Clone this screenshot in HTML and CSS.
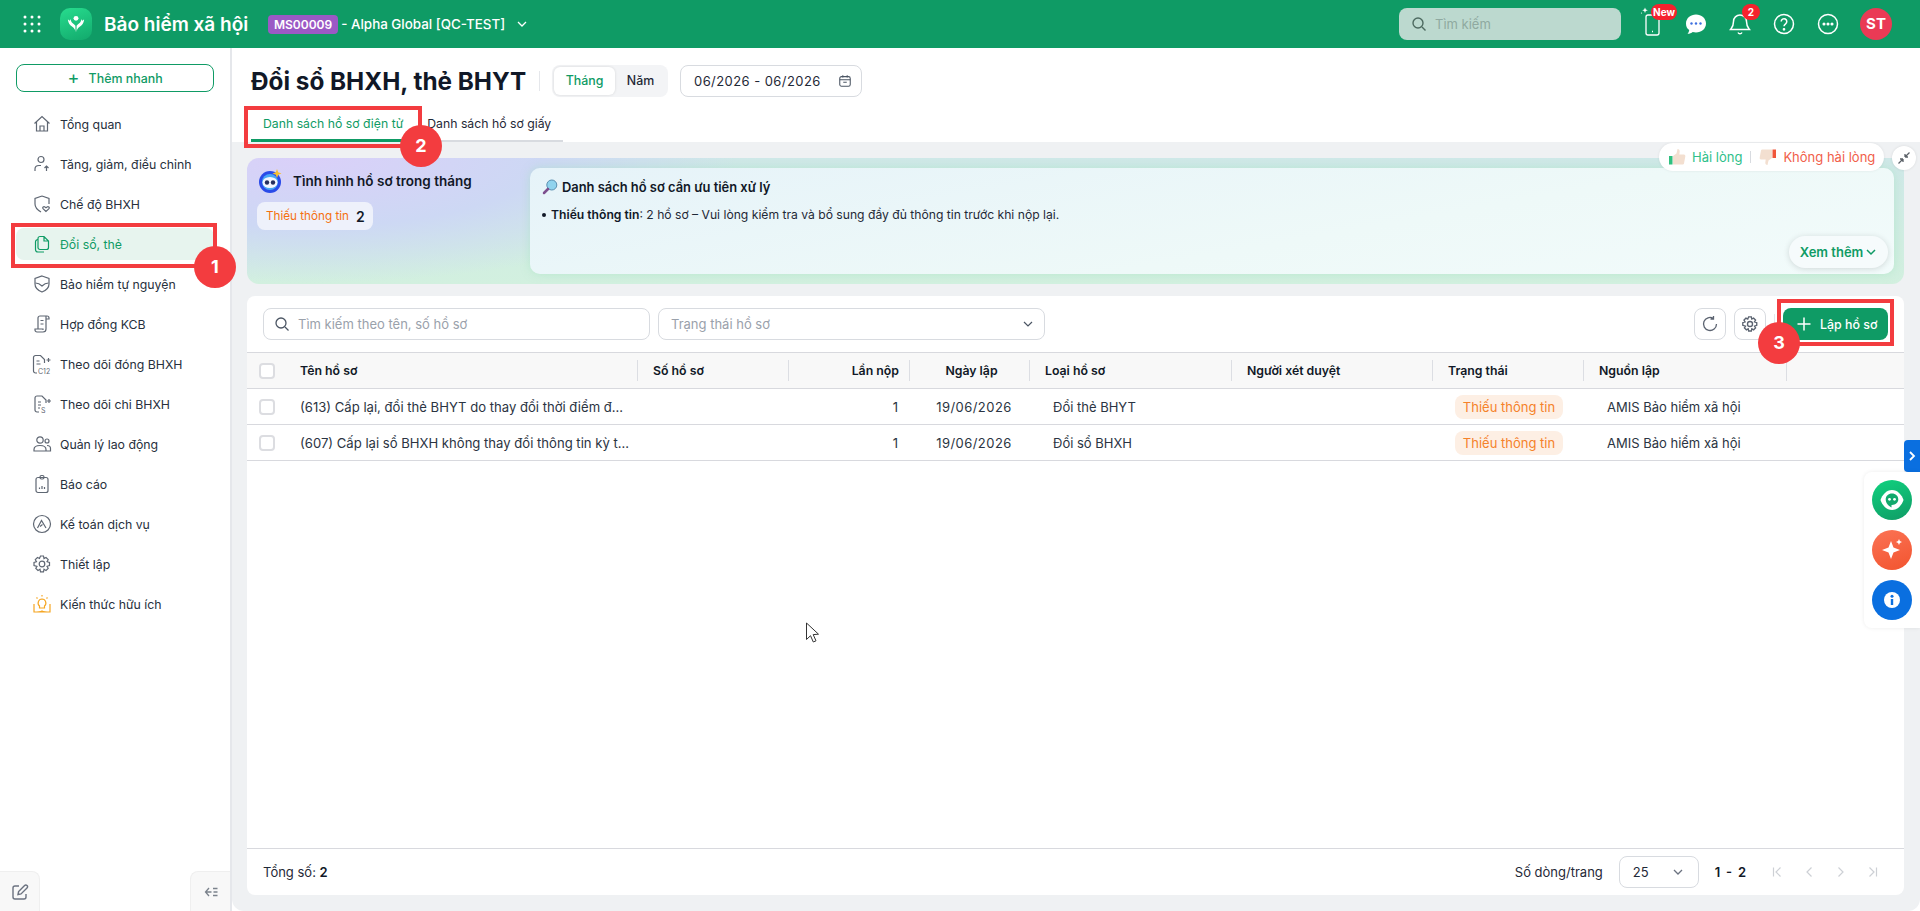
FILE: index.html
```html
<!DOCTYPE html>
<html lang="vi">
<head>
    <meta charset="UTF-8">
    <meta name="viewport" content="width=device-width, initial-scale=1.0">
    <title>Đổi sổ BHXH, thẻ BHYT</title>
    <link rel="stylesheet" href="styles.css">
</head>
<body>
    <!-- Thanh trên cùng -->
    <header class="topbar">
        <div class="topbar-left">
            <svg class="apps-icon" viewBox="0 0 18 18" fill="#fff"><circle cx="2" cy="2" r="1.5"/><circle cx="9" cy="2" r="1.5"/><circle cx="16" cy="2" r="1.5"/><circle cx="2" cy="9" r="1.5"/><circle cx="9" cy="9" r="1.5"/><circle cx="16" cy="9" r="1.5"/><circle cx="2" cy="16" r="1.5"/><circle cx="9" cy="16" r="1.5"/><circle cx="16" cy="16" r="1.5"/></svg>
            <div class="app-logo">
                <svg viewBox="0 0 32 32" width="26" height="26" fill="#fff"><circle cx="16" cy="9" r="3"/><path d="M15.300 26c-.2-3-1.500-5-3.800-6.500C8.500 17.500 6.500 15 6 10.500c1 .2 1.700.8 2.200 1.700.2-.8.5-1.400 1.100-1.900.3 1.800 1 3.400 2.300 4.600 1.300 1.100 2.600 2 3.700 3.300z"/><path d="M16.700 26c.2-3 1.500-5 3.800-6.500 3-2 5-4.500 5.500-9-1 .2-1.700.8-2.200 1.700-.2-.8-.5-1.400-1.100-1.900-.3 1.800-1 3.400-2.300 4.600-1.300 1.100-2.600 2-3.700 3.300z"/></svg>
            </div>
            <span class="app-name">Bảo hiểm xã hội</span>
            <span class="org-code">MS00009</span>
            <span class="org-name">- Alpha Global [QC-TEST]</span>
            <svg class="org-caret" viewBox="0 0 12 12" fill="none" stroke="#fff" stroke-width="1.3"><path d="M2 4l4 4 4-4"/></svg>
        </div>
        <div class="topbar-right">
            <div class="top-search">
                <svg viewBox="0 0 16 16" width="16" height="16" fill="none" stroke="#4d6a60" stroke-width="1.4"><circle cx="7" cy="7" r="5"/><path d="M11 11l3.500 3.500"/></svg>
                <span>Tìm kiếm</span>
            </div>
            <div class="top-icons">
                <div class="top-icon">
                    <svg viewBox="0 0 24 24" width="24" height="24" fill="none" stroke="#fff" stroke-width="1.3"><rect x="6" y="3" width="13" height="20" rx="2"/><path d="M12 19.500h1"/><path d="M5 -4.500l.8 2 2 .8-2 .8-.8 2-.8-2-2-.8 2-.8z" fill="#fff" stroke="none"/><circle cx="1.500" cy="1" r=".6" fill="#fff" stroke="none"/></svg>
                    <span class="top-badge badge-new">New</span>
                </div>
                <div class="top-icon">
                    <svg viewBox="0 0 24 24" width="24" height="24"><path d="M12 2.500c5.500 0 10 3.800 10 9s-4.500 9-10 9c-1.200 0-2.300-.2-3.300-.5-1.200 1-3 1.800-5.200 1.800 1-1 1.600-2.300 1.700-3.700C2.900 16.400 2 14.100 2 11.500c0-5.200 4.500-9 10-9z" fill="#fff"/><circle cx="7.500" cy="11.500" r="1.200" fill="#3d6fe0"/><circle cx="12" cy="11.500" r="1.200" fill="#3d6fe0"/><circle cx="16.500" cy="11.500" r="1.200" fill="#3d6fe0"/></svg>
                </div>
                <div class="top-icon">
                    <svg viewBox="0 0 24 24" width="24" height="24" fill="none" stroke="#fff" stroke-width="1.500"><path d="M12 3a6.500 6.500 0 0 0-6.500 6.500c0 5-2 6.500-3 8h19c-1-1.500-3-3-3-8A6.500 6.500 0 0 0 12 3z"/><path d="M10 20.500a2.200 2.200 0 0 0 4 0"/></svg>
                    <span class="top-badge badge-count">2</span>
                </div>
                <div class="top-icon">
                    <svg viewBox="0 0 24 24" width="24" height="24" fill="none" stroke="#fff" stroke-width="1.500"><circle cx="12" cy="12" r="9.500"/><path d="M9.200 9.500a2.800 2.800 0 1 1 4.400 2.300c-1 .7-1.600 1.300-1.600 2.500"/><circle cx="12" cy="17.300" r=".6" fill="#fff"/></svg>
                </div>
                <div class="top-icon">
                    <svg viewBox="0 0 24 24" width="24" height="24" fill="none" stroke="#fff" stroke-width="1.500"><circle cx="12" cy="12" r="9.500"/><circle cx="8" cy="12" r=".8" fill="#fff"/><circle cx="12" cy="12" r=".8" fill="#fff"/><circle cx="16" cy="12" r=".8" fill="#fff"/></svg>
                </div>
            </div>
            <div class="avatar">ST</div>
        </div>
    </header>

    <div class="app-body">
        <!-- Menu trái -->
        <aside class="sidebar">
            <button class="quick-add"><span class="quick-plus">+</span> Thêm nhanh</button>
            <nav class="nav-list">
                <a class="nav-item">
                    <svg class="nav-icon" viewBox="0 0 20 20"><path d="M2.500 9.500L10 2.500l7.500 7M4.500 8v9h11V8M8 17v-5h4v5"/></svg>
                    Tổng quan
                </a>
                <a class="nav-item">
                    <svg class="nav-icon" viewBox="0 0 20 20"><circle cx="9" cy="5.500" r="3"/><path d="M3 17v-2c0-2 1.500-3.500 4-3.500h2M14.500 17v-5M12.500 14l2-2 2 2"/></svg>
                    Tăng, giảm, điều chỉnh
                </a>
                <a class="nav-item">
                    <svg class="nav-icon" viewBox="0 0 20 20"><path d="M10 2l7 2.500V10M10 2L3 4.500V10c0 3.500 2.500 6 6 8"/><path d="M14 17.500l-3-2.800c-1-1.200.7-2.700 2-1.700l1 .7 1-.7c1.300-1 3 .5 2 1.700z"/></svg>
                    Chế độ BHXH
                </a>
                <a class="nav-item active">
                    <svg class="nav-icon" viewBox="0 0 20 20"><path d="M8 2.500h4l4.500 4.500v6.500a2 2 0 0 1-2 2H8a2 2 0 0 1-2-2v-9a2 2 0 0 1 2-2zM12 2.500V7h4.500"/><path d="M6 5.500a2.500 2.500 0 0 0-2.500 2.500v7.500a2.500 2.500 0 0 0 2.500 2.500h6"/></svg>
                    Đổi sổ, thẻ
                </a>
                <a class="nav-item">
                    <svg class="nav-icon" viewBox="0 0 20 20"><path d="M10 2l7 2.500V10c0 4-3 6.500-7 8-4-1.500-7-4-7-8V4.500z"/><path d="M3.500 9c2.500 0 4.500 1 6.500 3 2-2 4-3 6.500-3"/></svg>
                    Bảo hiểm tự nguyện
                </a>
                <a class="nav-item">
                    <svg class="nav-icon" viewBox="0 0 20 20"><path d="M6 15V4a2 2 0 0 1 2-2h7a2 2 0 0 1 2 2v1h-3M14 2v13a3 3 0 0 1-3 3H5a2 2 0 0 1-2-2v-1h8v1M8.500 6.500h3M8.500 10h3"/></svg>
                    Hợp đồng KCB
                </a>
                <a class="nav-item">
                    <svg class="nav-icon" viewBox="0 0 20 20"><path d="M5 19H3.500a2 2 0 0 1-2-2V3.500a2 2 0 0 1 2-2h5l4 4V9M4.500 7h3M4.500 10h4M16.500 4v4M14.500 6h4"/><text x="6" y="19.500" class="nav-icon-text">C12</text></svg>
                    Theo dõi đóng BHXH
                </a>
                <a class="nav-item">
                    <svg class="nav-icon" viewBox="0 0 20 20"><path d="M7 18H5a2 2 0 0 1-2-2V4a2 2 0 0 1 2-2h5l4 4v3M6 8h3M6 11h3M6 14h2M17 5v4M15 7h4"/><text x="9" y="18.500" class="nav-icon-text">S</text></svg>
                    Theo dõi chi BHXH
                </a>
                <a class="nav-item">
                    <svg class="nav-icon" viewBox="0 0 20 20"><circle cx="8" cy="6" r="3.200"/><circle cx="15" cy="7" r="2"/><path d="M2 17v-1.500c0-2.500 2-4 6-4s6 1.500 6 4V17zM15 11.500c2 0 3.500 1 3.500 3V17H14"/></svg>
                    Quản lý lao động
                </a>
                <a class="nav-item">
                    <svg class="nav-icon" viewBox="0 0 20 20"><rect x="4" y="3.500" width="12" height="15" rx="2"/><rect x="8" y="1.500" width="4" height="3.500" rx="1.500"/><path d="M7.500 15v-1.500M10 15v-3M12.500 15v-2"/></svg>
                    Báo cáo
                </a>
                <a class="nav-item">
                    <svg class="nav-icon" viewBox="0 0 20 20"><circle cx="10" cy="10" r="8.500"/><path d="M5.500 14l4-7.500 4.500 7.500M8 12.500l2.500-2"/></svg>
                    Kế toán dịch vụ
                </a>
                <a class="nav-item">
                    <svg class="nav-icon" viewBox="0 0 20 20"><path d="M8.500 2h3l.5 2.500 2-1 2.200 2.200-1.200 2 2.500.8v3l-2.500.8 1.200 2-2.200 2.200-2-1.200-.5 2.500h-3l-.5-2.500-2 1.200-2.200-2.200 1.200-2L2 11.500v-3l2.500-.8-1.200-2L5.500 3.500l2 1z"/><circle cx="10" cy="10" r="2.800"/></svg>
                    Thiết lập
                </a>
                <a class="nav-item">
                    <svg class="nav-icon nav-icon-orange" viewBox="0 0 20 20"><path d="M2 10v8h16v-8M2 18c3 0 6 0 8-1 2 1 5 1 8 1"/><path d="M10 5a4 4 0 0 0-2.500 7v2h5v-2A4 4 0 0 0 10 5zM10 1v1.500M4.500 3.500l1 1M15.500 3.500l-1 1"/></svg>
                    Kiến thức hữu ích
                </a>
            </nav>
            <div class="sidebar-foot">
                <div class="foot-btn">
                    <svg viewBox="0 0 18 18" width="18" height="18" fill="none" stroke="#6b7280" stroke-width="1.400"><path d="M8 3H4a2 2 0 0 0-2 2v9a2 2 0 0 0 2 2h9a2 2 0 0 0 2-2v-3"/><path d="M7 11.500l.6-3 6-6a1.400 1.400 0 0 1 2.400 2.400l-6 6z"/></svg>
                </div>
                <div class="foot-btn">
                    <svg viewBox="0 0 16 16" width="16" height="16" fill="none" stroke="#7b828c" stroke-width="1.300"><path d="M6 4L2.500 8 6 12M2.500 8h6M10 4.500h4.500M10.500 8h4M10 11.500h4.500"/></svg>
                </div>
            </div>
        </aside>

        <main class="main">
            <div class="page-head">
                <div class="title-row">
                    <h1 class="page-title">Đổi sổ BHXH, thẻ BHYT</h1>
                    <div class="period-toggle">
                        <span class="period-opt on">Tháng</span>
                        <span class="period-opt">Năm</span>
                    </div>
                    <div class="date-range">
                        <span>06/2026 - 06/2026</span>
                        <svg viewBox="0 0 16 16" width="14" height="14" fill="none" stroke="#4b5563" stroke-width="1.200"><rect x="2" y="3" width="12" height="11" rx="2"/><path d="M2 6.500h12M5.500 1.500V4M10.500 1.500V4M6 9.500h4"/></svg>
                    </div>
                </div>
                <div class="tabs">
                    <a class="tab active">Danh sách hồ sơ điện tử</a>
                    <a class="tab">Danh sách hồ sơ giấy</a>
                </div>
            </div>

            <div class="workspace">
                <section class="banner">
                    <div class="banner-left">
                        <div class="banner-head">
                            <svg viewBox="0 0 26 26" width="26" height="26"><circle cx="12" cy="14" r="11" fill="#2a4be8"/><circle cx="12" cy="14" r="8" fill="#4aa8f5"/><ellipse cx="12" cy="14.500" rx="7.500" ry="5.500" fill="#f4f6ff"/><circle cx="9" cy="14.500" r="2.200" fill="#26305f"/><circle cx="15" cy="14.500" r="2.200" fill="#26305f"/><path d="M19 1l1.200 3.300L23.500 5.500l-3.300 1.200L19 10l-1.200-3.300-3.300-1.200 3.300-1.200z" fill="#f7c02f"/></svg>
                            <span>Tình hình hồ sơ trong tháng</span>
                        </div>
                        <div class="stat-chip"><span class="stat-label">Thiếu thông tin</span><b>2</b></div>
                    </div>
                    <div class="banner-box">
                        <div class="box-title">
                            <svg viewBox="0 0 16 16" width="16" height="16"><circle cx="9.800" cy="6" r="5" fill="#8fd3ee" stroke="#5a8fb0"/><path d="M6 10l-4 4" stroke="#7d4f8e" stroke-width="2.500" stroke-linecap="round"/></svg>
                            <span>Danh sách hồ sơ cần ưu tiên xử lý</span>
                        </div>
                        <p class="box-line"><span class="box-dot"></span><b>Thiếu thông tin</b>: 2 hồ sơ – Vui lòng kiểm tra và bổ sung đầy đủ thông tin trước khi nộp lại.</p>
                        <button class="more-btn">Xem thêm
                            <svg viewBox="0 0 12 12" width="12" height="12" fill="none" stroke="#0f9b65" stroke-width="1.500"><path d="M2 4l4 4 4-4"/></svg>
                        </button>
                    </div>
                    <div class="feedback">
                        <svg viewBox="0 0 18 18" width="18" height="18"><rect x="1" y="8" width="3.500" height="8.500" fill="#2fc07f"/><path d="M5 8l3.500-2.500L9.500 1c1.500 0 2.300 1 2.200 2.500L11.300 6.500H16c1 0 1.500 1 1.300 2l-1.300 7c-.2.800-.8 1-1.500 1H5z" fill="#f3dfd0"/></svg>
                        <span class="fb-good">Hài lòng</span>
                        <i class="fb-sep"></i>
                        <svg viewBox="0 0 18 18" width="18" height="18"><rect x="13.500" y="1.500" width="3.500" height="8.500" fill="#f0563a"/><path d="M13 10l-3.500 2.500L8.500 17c-1.500 0-2.300-1-2.200-2.500l.4-3H2c-1 0-1.500-1-1.300-2l1.300-7c.2-.8.8-1 1.500-1H13z" fill="#f3dfd0"/></svg>
                        <span class="fb-bad">Không hài lòng</span>
                    </div>
                    <div class="collapse-btn">
                        <svg viewBox="0 0 14 14" width="14" height="14" fill="none" stroke="#5b6168" stroke-width="1.300"><path d="M8 6l4.500-4.500M8 6V3M8 6h3M6 8l-4.500 4.500M6 8v3M6 8H3"/></svg>
                    </div>
                </section>

                <section class="card">
                    <div class="toolbar">
                        <div class="field field-search">
                            <svg viewBox="0 0 16 16" width="16" height="16" fill="none" stroke="#4b5563" stroke-width="1.300"><circle cx="7" cy="7" r="5"/><path d="M11 11l3.500 3.500"/></svg>
                            <span>Tìm kiếm theo tên, số hồ sơ</span>
                        </div>
                        <div class="field field-select">
                            <span>Trạng thái hồ sơ</span>
                            <svg viewBox="0 0 12 12" width="12" height="12" fill="none" stroke="#4b5563" stroke-width="1.200"><path d="M2 4l4 4 4-4"/></svg>
                        </div>
                        <div class="toolbar-right">
                            <button class="icon-btn">
                                <svg viewBox="0 0 18 18" width="18" height="18" fill="none" stroke="#5b6370" stroke-width="1.300"><path d="M15.500 9A6.500 6.500 0 1 1 12.500 3.500M12.500 1v3h-3"/></svg>
                            </button>
                            <button class="icon-btn">
                                <svg viewBox="0 0 20 20" width="18" height="18" fill="none" stroke="#5b6370" stroke-width="1.500"><path d="M8.500 2h3l.5 2.500 2-1 2.200 2.200-1.200 2 2.500.8v3l-2.500.8 1.200 2-2.200 2.200-2-1.200-.5 2.500h-3l-.5-2.500-2 1.200-2.200-2.200 1.200-2L2 11.500v-3l2.500-.8-1.200-2L5.500 3.500l2 1z"/><circle cx="10" cy="10" r="2.800"/></svg>
                            </button>
                            <i class="toolbar-sep"></i>
                            <button class="primary-btn">
                                <svg viewBox="0 0 16 16" width="16" height="16" fill="none" stroke="#fff" stroke-width="1.500"><path d="M8 1.500v13M1.500 8h13"/></svg>
                                Lập hồ sơ
                            </button>
                        </div>
                    </div>

                    <div class="table-wrap">
                        <table class="grid">
                            <colgroup>
                                <col class="c-check"><col class="c-name"><col class="c-no"><col class="c-times"><col class="c-date"><col class="c-type"><col class="c-person"><col class="c-status"><col class="c-source"><col class="c-end">
                            </colgroup>
                            <thead>
                                <tr>
                                    <th class="cell-check"><span class="check"></span></th>
                                    <th>Tên hồ sơ</th>
                                    <th>Số hồ sơ</th>
                                    <th class="right">Lần nộp</th>
                                    <th class="center">Ngày lập</th>
                                    <th>Loại hồ sơ</th>
                                    <th>Người xét duyệt</th>
                                    <th>Trạng thái</th>
                                    <th>Nguồn lập</th>
                                    <th class="no-sep"></th>
                                </tr>
                            </thead>
                            <tbody>
                                <tr>
                                    <td class="cell-check"><span class="check"></span></td>
                                    <td class="name">(613) Cấp lại, đổi thẻ BHYT do thay đổi thời điểm đ...</td>
                                    <td></td>
                                    <td class="right">1</td>
                                    <td class="center date">19/06/2026</td>
                                    <td class="pad">Đổi thẻ BHYT</td>
                                    <td></td>
                                    <td class="pad-status"><span class="status">Thiếu thông tin</span></td>
                                    <td class="pad">AMIS Bảo hiểm xã hội</td>
                                    <td></td>
                                </tr>
                                <tr>
                                    <td class="cell-check"><span class="check"></span></td>
                                    <td class="name">(607) Cấp lại sổ BHXH không thay đổi thông tin kỳ t...</td>
                                    <td></td>
                                    <td class="right">1</td>
                                    <td class="center date">19/06/2026</td>
                                    <td class="pad">Đổi sổ BHXH</td>
                                    <td></td>
                                    <td class="pad-status"><span class="status">Thiếu thông tin</span></td>
                                    <td class="pad">AMIS Bảo hiểm xã hội</td>
                                    <td></td>
                                </tr>
                            </tbody>
                        </table>
                    </div>

                    <footer class="card-foot">
                        <div class="total">Tổng số: <b>2</b></div>
                        <div class="pager">
                            <span>Số dòng/trang</span>
                            <div class="page-size">
                                <span>25</span>
                                <svg viewBox="0 0 12 12" width="12" height="12" fill="none" stroke="#6b7280" stroke-width="1.300"><path d="M2 4l4 4 4-4"/></svg>
                            </div>
                            <b class="page-range">1 - 2</b>
                            <div class="page-arrows">
                                <svg viewBox="0 0 12 12" width="12" height="12"><path d="M2.500 1.500v9M9.500 1.500L5 6l4.500 4.500"/></svg>
                                <svg viewBox="0 0 12 12" width="12" height="12"><path d="M8.500 1.500L4 6l4.500 4.500"/></svg>
                                <svg viewBox="0 0 12 12" width="12" height="12"><path d="M3.500 1.500L8 6l-4.500 4.500"/></svg>
                                <svg viewBox="0 0 12 12" width="12" height="12"><path d="M9.500 1.500v9M2.500 1.500L7 6l-4.500 4.500"/></svg>
                            </div>
                        </div>
                    </footer>
                </section>
            </div>
        </main>
    </div>

    <!-- Nút nổi bên phải -->
    <div class="side-tab">
        <svg viewBox="0 0 12 12" width="12" height="12" fill="none" stroke="#fff" stroke-width="1.800"><path d="M4 2l4 4-4 4"/></svg>
    </div>
    <div class="side-dock">
        <div class="dock-btn dock-green">
            <svg viewBox="0 0 28 28" width="28" height="28"><path d="M14 4c5.500 0 10 5 11.500 10C24 19 19.500 24 14 24S4 19 2.500 14C4 9 8.500 4 14 4z" fill="#fff"/><path d="M14 7.500c3.600 0 6.300 2.600 6.300 5.800 0 3.200-2.700 5.700-6.300 5.700h-.5v2.500c-3-1.400-5.800-4.400-5.800-8.200 0-3.200 2.700-5.800 6.300-5.800z" fill="#12a96c"/><circle cx="11.500" cy="13.300" r="1.400" fill="#fff"/><circle cx="16.500" cy="13.300" r="1.400" fill="#fff"/></svg>
        </div>
        <div class="dock-btn dock-orange">
            <svg viewBox="0 0 28 28" width="28" height="28" fill="#fff"><path d="M13 5l2.500 6.500L22 14l-6.500 2.500L13 23l-2.500-6.500L4 14l6.500-2.500z"/><path d="M21 3l.9 2.100L24 6l-2.100.9L21 9l-.9-2.100L18 6l2.100-.9z"/></svg>
        </div>
        <div class="dock-btn dock-blue">
            <svg viewBox="0 0 28 28" width="28" height="28"><circle cx="14" cy="14" r="8" fill="#fff"/><rect x="12.800" y="13" width="2.400" height="6" fill="#0a6fe0"/><circle cx="14" cy="10.300" r="1.500" fill="#0a6fe0"/></svg>
        </div>
    </div>

    <!-- Chú thích đánh số trên ảnh chụp -->
    <div class="mark-box box-1"></div>
    <div class="mark-box box-2"></div>
    <div class="mark-box box-3"></div>
    <div class="mark-dot dot-1">1</div>
    <div class="mark-dot dot-2">2</div>
    <div class="mark-dot dot-3">3</div>

    <svg class="mouse-cursor" viewBox="0 0 14 22" width="14" height="22"><path d="M1.500 1v16.500l4-3.800 2.800 6.300 2.700-1.200-2.800-6.200 5.300-.4z" fill="#fff" stroke="#333" stroke-width="1"/></svg>
</body>
</html>
```

FILE: styles.css
```css
* {
    margin: 0;
    padding: 0;
    box-sizing: border-box;
}

body {
    font-family: Inter, "Noto Sans", sans-serif;
    font-size: 13px;
    color: #1f2937;
    height: 100vh;
    overflow: hidden;
    background: #fff;
    display: flex;
    flex-direction: column;
}

button {
    font-family: inherit;
    cursor: pointer;
}

/* Thanh trên cùng */
.topbar {
    height: 48px;
    flex-shrink: 0;
    background: #0f9b65;
    color: #fff;
    display: flex;
    align-items: center;
    justify-content: space-between;
    padding: 0 28px 0 23px;
}

.topbar-left,
.topbar-right {
    display: flex;
    align-items: center;
}

.apps-icon {
    width: 18px;
    height: 18px;
    margin-right: 19px;
}

.app-logo {
    width: 32px;
    height: 32px;
    border-radius: 10px;
    background: linear-gradient(160deg, #27dc8e, #12a96c);
    display: flex;
    align-items: center;
    justify-content: center;
    margin-right: 12px;
}

.app-name {
    font-size: 19px;
    font-weight: 600;
    width: 164px;
    white-space: nowrap;
}

.org-code {
    background: #9b59c5;
    border-radius: 4px;
    height: 19px;
    line-height: 19px;
    padding: 0 6px;
    font-size: 12px;
    font-weight: 600;
    margin-right: 3px;
}

.org-name {
    font-size: 13.400px;
    font-weight: 500;
    white-space: nowrap;
}

.org-caret {
    width: 12px;
    height: 12px;
    margin-left: 11px;
}

.top-search {
    width: 222px;
    height: 32px;
    border-radius: 8px;
    background: #bcd9cf;
    display: flex;
    align-items: center;
    gap: 8px;
    padding: 0 12px;
    color: #8fa9a0;
    margin-right: 13px;
}

.top-icons {
    display: flex;
    gap: 8px;
    margin-right: 14px;
}

.top-icon {
    width: 36px;
    height: 36px;
    display: flex;
    align-items: center;
    justify-content: center;
    position: relative;
}

.top-icon svg {
    overflow: visible;
}

.top-badge {
    position: absolute;
    background: #f5222d;
    color: #fff;
    font-size: 10px;
    font-weight: 700;
    height: 16px;
    line-height: 16px;
    border-radius: 8px;
    text-align: center;
}

.badge-new {
    top: -2px;
    left: 17px;
    width: 26px;
}

.badge-count {
    top: -2px;
    left: 20px;
    width: 18px;
}

.avatar {
    width: 32px;
    height: 32px;
    border-radius: 50%;
    background: #ea3a55;
    font-size: 15px;
    font-weight: 700;
    text-align: center;
    line-height: 32px;
}

/* Menu trái */
.app-body {
    flex: 1;
    display: flex;
    min-height: 0;
}

.sidebar {
    width: 232px;
    flex-shrink: 0;
    border-right: 2px solid #e5e7eb;
    padding-top: 16px;
    display: flex;
    flex-direction: column;
}

.quick-add {
    height: 28px;
    margin: 0 16px 0 16px;
    width: 198px;
    background: #fff;
    border: 1px solid #0f9b65;
    border-radius: 8px;
    color: #0f9b65;
    font-size: 12.400px;
    font-weight: 500;
}

.quick-plus {
    font-size: 18px;
    font-weight: 400;
    line-height: 14px;
    margin-right: 6px;
    vertical-align: -1px;
}

.nav-list {
    display: flex;
    flex-direction: column;
    gap: 8px;
    margin-top: 16px;
    flex: 1;
}

.nav-item {
    height: 32px;
    margin: 0 16px;
    width: 198px;
    border-radius: 8px;
    padding-left: 16px;
    display: flex;
    align-items: center;
    gap: 8px;
    color: #27303d;
    font-size: 12.300px;
    white-space: nowrap;
    font-weight: 400;
}

.nav-item.active {
    background: #e7f4ee;
    color: #0f9b65;
}

.nav-icon {
    width: 20px;
    height: 20px;
    fill: none;
    stroke: #5f6773;
    stroke-width: 1.2;
    flex-shrink: 0;
}

.nav-item.active .nav-icon {
    stroke: #0f9b65;
}

.nav-icon-orange {
    stroke: #f5a623;
}

.nav-icon-text {
    font-size: 7px;
    fill: #5f6773;
    stroke: none;
}

.sidebar-foot {
    display: flex;
    justify-content: space-between;
    height: 40px;
}

.foot-btn {
    width: 40px;
    height: 40px;
    background: #f8f8f8;
    display: flex;
    align-items: center;
    justify-content: center;
    border: 1px solid #efefef;
    border-bottom: none;
}

.foot-btn:first-child {
    border-left: none;
    border-top-right-radius: 8px;
}

.foot-btn:last-child {
    border-right: none;
    border-top-left-radius: 8px;
}

/* Tiêu đề trang */
.main {
    flex: 1;
    min-width: 0;
    display: flex;
    flex-direction: column;
}

.page-head {
    height: 94px;
    flex-shrink: 0;
    padding-left: 19px;
    display: flex;
    flex-direction: column;
}

.title-row {
    display: flex;
    align-items: center;
    margin-top: 17px;
    height: 32px;
}

.page-title {
    font-size: 24.300px;
    font-weight: 700;
    color: #111827;
    white-space: nowrap;
    position: relative;
    width: 289px;
}

.page-title::after {
    content: "";
    position: absolute;
    right: 0;
    top: 5px;
    bottom: 5px;
    width: 1px;
    background: #e5e7eb;
}

.period-toggle {
    width: 116px;
    height: 32px;
    background: #f3f4f6;
    border-radius: 8px;
    display: flex;
    align-items: center;
    padding: 2px;
    margin-left: 12px;
}

.period-opt {
    flex: 1;
    text-align: center;
    height: 28px;
    line-height: 28px;
    font-size: 12.400px;
    font-weight: 500;
    color: #1f2937;
}

.period-opt.on {
    flex: none;
    width: 61px;
    background: #fff;
    border-radius: 6px;
    color: #0f9b65;
    box-shadow: 0 0 3px rgba(0, 0, 0, 0.12);
}

.date-range {
    width: 182px;
    height: 32px;
    border: 1px solid #d8dbe0;
    border-radius: 8px;
    margin-left: 12px;
    padding: 0 9px 0 13px;
    display: flex;
    align-items: center;
    justify-content: space-between;
    letter-spacing: 0.430px;
    white-space: nowrap;
}

.tabs {
    display: flex;
    margin-top: 9px;
    height: 36px;
}

.tab {
    height: 36px;
    line-height: 35px;
    padding: 0 12px;
    font-size: 12.250px;
    color: #1f2937;
    white-space: nowrap;
    border-bottom: 2px solid #d8dbe0;
}

.tab.active {
    color: #0f9b65;
    border-bottom: 3px solid #0f9b65;
}

/* Vùng nội dung */
.workspace {
    flex: 1;
    min-height: 0;
    background: #eff1f3;
    border-radius: 0 0 12px 12px;
    padding: 16px 16px 16px 15px;
    display: flex;
    flex-direction: column;
    gap: 12px;
}

.banner {
    height: 126px;
    flex-shrink: 0;
    border-radius: 12px;
    background:
        radial-gradient(ellipse 430px 125px at 60px 0, #dad0f9 0%, #cdd8f4 55%, rgba(205, 216, 244, 0) 100%),
        linear-gradient(180deg, #cfe8e8 0%, #d2f0df 100%);
    padding: 10px;
    display: flex;
    position: relative;
}

.banner-left {
    width: 273px;
    flex-shrink: 0;
}

.banner-head {
    display: flex;
    align-items: center;
    gap: 9px;
    font-size: 13.500px;
    font-weight: 600;
    color: #111827;
    margin-left: 1px;
    white-space: nowrap;
}

.stat-chip {
    width: 116px;
    height: 28px;
    margin-top: 8px;
    border-radius: 8px;
    background: #eef1fb;
    display: flex;
    align-items: center;
    padding-left: 9px;
    gap: 7px;
    white-space: nowrap;
}

.stat-label {
    color: #f5700f;
    font-size: 11.700px;
}

.stat-chip b {
    font-size: 14px;
    font-weight: 600;
    color: #111827;
}

.banner-box {
    flex: 1;
    border-radius: 10px;
    background: linear-gradient(170deg, #e6f3f9 0%, #eef9f8 60%, #f2fbfb 100%);
    box-shadow: 0 0 8px rgba(160, 225, 190, 0.5);
    padding: 11px 12px;
    position: relative;
}

.box-title {
    display: flex;
    align-items: center;
    gap: 4px;
    font-size: 12.900px;
    font-weight: 600;
    color: #111827;
    white-space: nowrap;
}

.box-line {
    margin-top: 12px;
    white-space: nowrap;
    color: #1f2937;
    font-size: 12.150px;
    display: flex;
    align-items: center;
}

.box-line b {
    font-weight: 600;
    color: #111827;
    white-space: pre;
}

.box-dot {
    width: 4px;
    height: 4px;
    border-radius: 50%;
    background: #111827;
    margin-right: 5px;
    flex-shrink: 0;
}

.more-btn {
    position: absolute;
    right: 6px;
    bottom: 6px;
    width: 99px;
    height: 32px;
    border: none;
    border-radius: 16px;
    background: #f6fbfc;
    color: #0f9b65;
    font-size: 13px;
    font-weight: 600;
    box-shadow: 0 1px 6px rgba(0, 0, 0, 0.14);
    display: flex;
    align-items: center;
    justify-content: center;
    gap: 2px;
}

.feedback {
    position: absolute;
    top: -15px;
    right: 20px;
    width: 225px;
    height: 28px;
    border-radius: 14px;
    background: #fff;
    display: flex;
    align-items: center;
    padding-left: 9px;
    gap: 6px;
    white-space: nowrap;
    box-shadow: 0 0 3px rgba(0, 0, 0, 0.08);
}

.fb-good {
    color: #2fc08a;
}

.fb-bad {
    color: #f1604a;
}

.fb-sep {
    width: 1px;
    height: 12px;
    background: #d8dbe0;
    margin: 0 2px;
}

.collapse-btn {
    position: absolute;
    top: -12px;
    right: -12px;
    width: 24px;
    height: 24px;
    border-radius: 50%;
    background: #fff;
    display: flex;
    align-items: center;
    justify-content: center;
    box-shadow: 0 0 3px rgba(0, 0, 0, 0.1);
}

/* Bảng danh sách */
.card {
    flex: 1;
    min-height: 0;
    background: #fff;
    border-radius: 8px;
    display: flex;
    flex-direction: column;
}

.toolbar {
    height: 56px;
    flex-shrink: 0;
    display: flex;
    align-items: flex-start;
    padding: 12px 16px;
    gap: 8px;
}

.field {
    height: 32px;
    border: 1px solid #d8dbe0;
    border-radius: 8px;
    display: flex;
    align-items: center;
    color: #9aa1ab;
    white-space: nowrap;
}

.field-search {
    width: 387px;
    padding: 0 10px;
    gap: 8px;
}

.field-select {
    width: 387px;
    padding: 0 10px 0 12px;
    justify-content: space-between;
}

.toolbar-right {
    margin-left: auto;
    display: flex;
    align-items: center;
    gap: 8px;
}

.icon-btn {
    width: 32px;
    height: 32px;
    border: 1px solid #d8dbe0;
    border-radius: 8px;
    background: #fff;
    display: flex;
    align-items: center;
    justify-content: center;
}

.toolbar-sep {
    width: 1px;
    height: 20px;
    background: #e5e7eb;
}

.primary-btn {
    width: 105px;
    height: 32px;
    border: none;
    border-radius: 8px;
    background: #0f9b65;
    color: #fff;
    font-size: 12.400px;
    font-weight: 500;
    display: flex;
    align-items: center;
    padding-left: 13px;
    gap: 8px;
    white-space: nowrap;
}

.table-wrap {
    flex: 1;
    min-height: 0;
}

.grid {
    width: 100%;
    table-layout: fixed;
    border-collapse: separate;
    border-spacing: 0;
}

.c-check { width: 40px; }
.c-name { width: 351px; }
.c-no { width: 151px; }
.c-times { width: 121px; }
.c-date { width: 120px; }
.c-type { width: 202px; }
.c-person { width: 201px; }
.c-status { width: 151px; }
.c-source { width: 203px; }
.c-end { width: 117px; }

.grid th,
.grid td {
    height: 36px;
    padding: 0 12px;
    text-align: left;
    white-space: nowrap;
    border-bottom: 1px solid #d8d9de;
    font-size: 13px;
    overflow: hidden;
}

.grid th {
    height: 37px;
    background: #f8f8f8;
    font-size: 12.300px;
    font-weight: 600;
    color: #111827;
    border-top: 1px solid #d8d9de;
    position: relative;
    padding-left: 15px;
}

.grid th:nth-child(2) {
    padding-left: 13px;
}

.grid th.right {
    padding-right: 11px;
}

.grid th::after {
    content: "";
    position: absolute;
    right: 0;
    top: 7px;
    bottom: 7px;
    width: 1px;
    background: #dcdee3;
}

.grid th.cell-check::after,
.grid th.no-sep::after {
    display: none;
}

.grid td {
    color: #2b3442;
}

.grid td:nth-child(2) {
    padding-left: 13px;
}

.grid td.name {
    font-size: 13.100px;
}

.grid td.date {
    letter-spacing: 0.450px;
    padding-left: 16px;
    padding-right: 8px;
}

.grid .cell-check {
    padding: 0 0 0 12px;
}

.grid .right {
    text-align: right;
}

.grid .center {
    text-align: center;
}

.grid td.pad {
    padding-left: 23px;
}

.grid td.pad-status {
    padding-left: 22px;
}

.check {
    display: block;
    width: 16px;
    height: 16px;
    border: 2px solid #dcdde1;
    border-radius: 4px;
    background: #fff;
}

.status {
    display: inline-block;
    width: 108px;
    height: 24px;
    line-height: 24px;
    border-radius: 8px;
    background: #fdefe4;
    color: #f5822a;
    text-align: center;
}

.card-foot {
    height: 47px;
    flex-shrink: 0;
    border-top: 1px solid #d8d9de;
    display: flex;
    align-items: center;
    justify-content: space-between;
    padding: 0 25px 0 16px;
}

.total b {
    font-weight: 600;
    color: #111827;
}

.pager {
    display: flex;
    align-items: center;
}

.page-size {
    width: 80px;
    height: 32px;
    border: 1px solid #d8dbe0;
    border-radius: 8px;
    margin-left: 16px;
    padding: 0 14px 0 13px;
    display: flex;
    align-items: center;
    justify-content: space-between;
}

.page-range {
    margin-left: 16px;
    font-weight: 600;
    color: #111827;
    word-spacing: 2.500px;
}

.page-arrows {
    display: flex;
    gap: 20px;
    margin-left: 25px;
}

.page-arrows svg {
    fill: none;
    stroke: #cdd0d5;
    stroke-width: 1.2;
}

/* Nút nổi bên phải */
.side-tab {
    position: fixed;
    top: 440px;
    right: 0;
    width: 16px;
    height: 32px;
    background: #0a6fe0;
    border-radius: 4px 0 0 4px;
    display: flex;
    align-items: center;
    justify-content: center;
}

.side-dock {
    position: fixed;
    top: 472px;
    right: 0;
    width: 56px;
    height: 156px;
    background: #fff;
    border-radius: 8px 0 0 8px;
    box-shadow: 0 0 4px rgba(0, 0, 0, 0.08);
    padding: 8px;
    display: flex;
    flex-direction: column;
    gap: 10px;
}

.dock-btn {
    width: 40px;
    height: 40px;
    border-radius: 50%;
    display: flex;
    align-items: center;
    justify-content: center;
}

.dock-green {
    background: linear-gradient(160deg, #10d27f, #0f9b65);
}

.dock-orange {
    background: linear-gradient(160deg, #fb7355, #f2542f);
}

.dock-blue {
    background: #0a6fe0;
}

/* Chú thích đánh số */
.mark-box {
    position: fixed;
    border: 4px solid #f33c3f;
    pointer-events: none;
}

.box-1 {
    left: 11px;
    top: 223px;
    width: 206px;
    height: 45px;
}

.box-2 {
    left: 244px;
    top: 106px;
    width: 178px;
    height: 42px;
}

.box-3 {
    left: 1777px;
    top: 299px;
    width: 117px;
    height: 47px;
}

.mark-dot {
    position: fixed;
    width: 42px;
    height: 42px;
    border-radius: 50%;
    background: #f33c3f;
    color: #fff;
    font-size: 18px;
    font-weight: 700;
    text-align: center;
    line-height: 42px;
}

.dot-1 {
    left: 194px;
    top: 246px;
}

.dot-2 {
    left: 400px;
    top: 125px;
}

.dot-3 {
    left: 1758px;
    top: 322px;
}

.mouse-cursor {
    position: fixed;
    left: 805px;
    top: 622px;
}
```
